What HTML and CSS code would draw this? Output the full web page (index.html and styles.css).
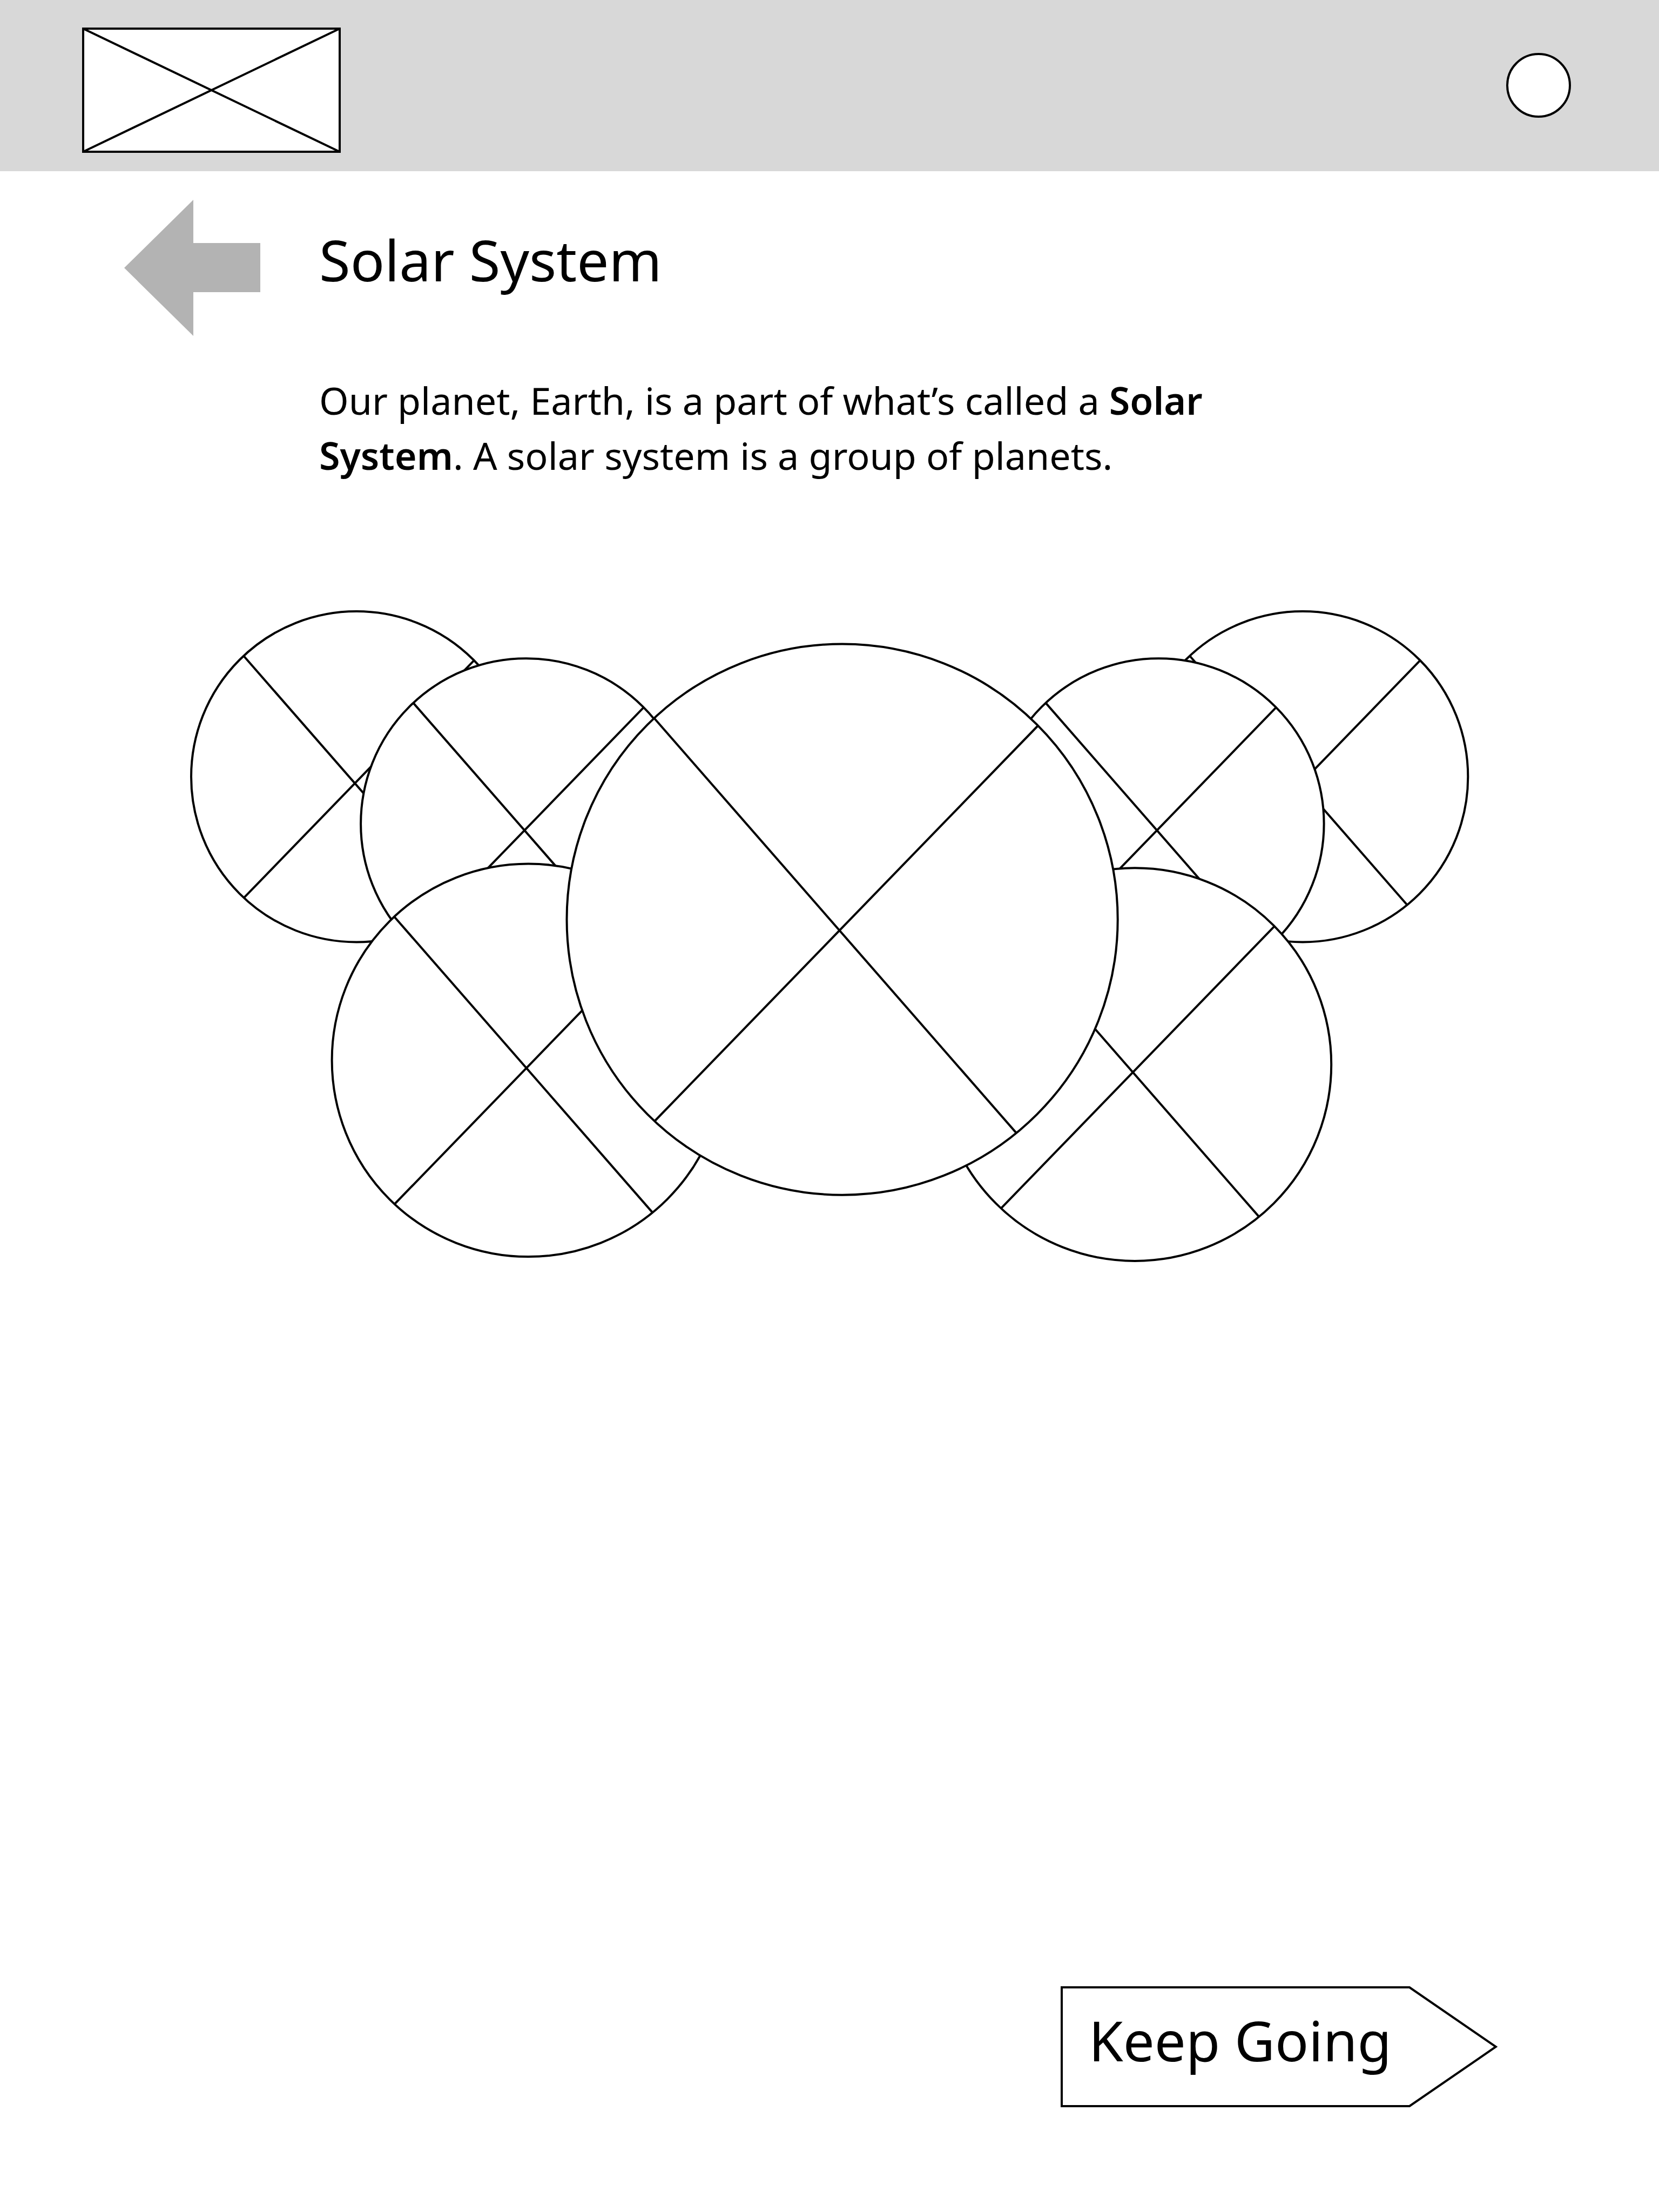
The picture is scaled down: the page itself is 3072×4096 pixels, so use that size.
FILE: index.html
```
<!DOCTYPE html>
<html lang="en">
<head>
  <meta charset="utf-8">
  <meta name="viewport" content="width=device-width, initial-scale=1">
  <title>Solar System</title>
  <link rel="stylesheet" href="styles.css">
</head>
<body>
  <div class="page">
    <header class="topbar">
      <a class="logo" href="#" aria-label="Home">
        <svg class="logo-art" viewBox="0 0 479 232" aria-hidden="true">
          <rect class="outline" x="2" y="2" width="475" height="228"/>
          <path class="outline" d="M2 2 477 230M477 2 2 230"/>
        </svg>
      </a>
      <button class="account" type="button" aria-label="Account"></button>
    </header>

    <main class="lesson">
      <section class="intro">
        <a class="back" href="#" aria-label="Back">
          <svg class="back-art" viewBox="0 0 252 252" aria-hidden="true">
            <path d="M0 126 128 0V80H252V171H128V252Z"/>
          </svg>
        </a>
        <div class="copy">
          <h1 class="title">Solar System</h1>
          <p class="text">Our planet, Earth, is a part of what’s called a <strong>Solar System</strong>. A solar system is a group of planets.</p>
        </div>
      </section>

      <figure class="planets">
        <svg class="planets-art" viewBox="350 1130 2372 1210" role="img" aria-label="Overlapping planets">
          <defs>
            <g id="planet">
              <circle class="outline" r="100"/>
              <path class="outline" d="M-68.2-73 63.1 77.4M71-70.3-68 73.1"/>
            </g>
          </defs>
          <use href="#planet" transform="translate(660.2 1439.3) scale(3.062)"/>
          <use href="#planet" transform="translate(974.3 1526.4) scale(3.062)"/>
          <use href="#planet" transform="translate(2412.1 1439.3) scale(3.062)"/>
          <use href="#planet" transform="translate(2145.4 1526.4) scale(3.062)"/>
          <use href="#planet" transform="translate(978.4 1964.3) scale(3.638)"/>
          <use href="#planet" transform="translate(2101.4 1972.1) scale(3.638)"/>
          <use href="#planet" transform="translate(1559.6 1703.6) scale(5.101)"/>
        </svg>
      </figure>
    </main>

    <footer class="actions">
      <button class="next" type="button">
        <svg class="next-art" viewBox="0 0 809 224" preserveAspectRatio="none" aria-hidden="true">
          <path class="outline" d="M2 2H646L806 112 646 222H2Z"/>
        </svg>
        <span class="next-label">Keep Going</span>
      </button>
    </footer>
  </div>
</body>
</html>
```
FILE: styles.css
```
* {
  box-sizing: border-box;
}

body {
  margin: 0;
  background: #fff;
  color: #000;
  font-family: "Noto Sans", "Open Sans", sans-serif;
}

.page {
  display: flex;
  flex-direction: column;
  min-height: 100vh;
}

.outline {
  fill: #fff;
  stroke: #000;
  stroke-width: 4px;
  vector-effect: non-scaling-stroke;
}

path.outline {
  fill: none;
}

svg {
  display: block;
}

/* Top bar */
.topbar {
  display: flex;
  justify-content: space-between;
  align-items: flex-start;
  padding: 51px 163px 34px 152px;
  background: #d8d8d8;
}

.logo-art {
  width: 479px;
  height: 232px;
}

.account {
  width: 120px;
  height: 120px;
  margin-top: 47px;
  padding: 0;
  border: 4px solid #000;
  border-radius: 50%;
  background: #fff;
}

/* Heading and lesson text */
.intro {
  display: flex;
  gap: 109px;
  padding: 53px 230px 0;
}

.back {
  flex: none;
}

.back-art {
  width: 252px;
  height: 252px;
  fill: #b3b3b3;
}

.title {
  margin: 40px 0 0;
  font-size: 105px;
  font-weight: 400;
  line-height: 142px;
}

.text {
  max-width: 1700px;
  margin: 138px 0 0;
  font-size: 70px;
  line-height: 102px;
}

.text strong {
  font-weight: 600;
}

.planets {
  margin: 235px 350px 0;
}

.planets-art {
  width: 100%;
}

/* Bottom action */
.actions {
  display: flex;
  justify-content: flex-end;
  margin-top: auto;
  padding: 0 299px 194px;
}

.next {
  display: grid;
  padding: 0;
  border: 0;
  background: none;
  color: inherit;
  font: inherit;
  font-size: 103px;
  line-height: 142px;
  text-align: left;
}

.next-art,
.next-label {
  grid-area: 1 / 1;
}

.next-art {
  width: 809px;
  height: 224px;
}

.next-label {
  padding: 28px 0 0 52px;
}
```
